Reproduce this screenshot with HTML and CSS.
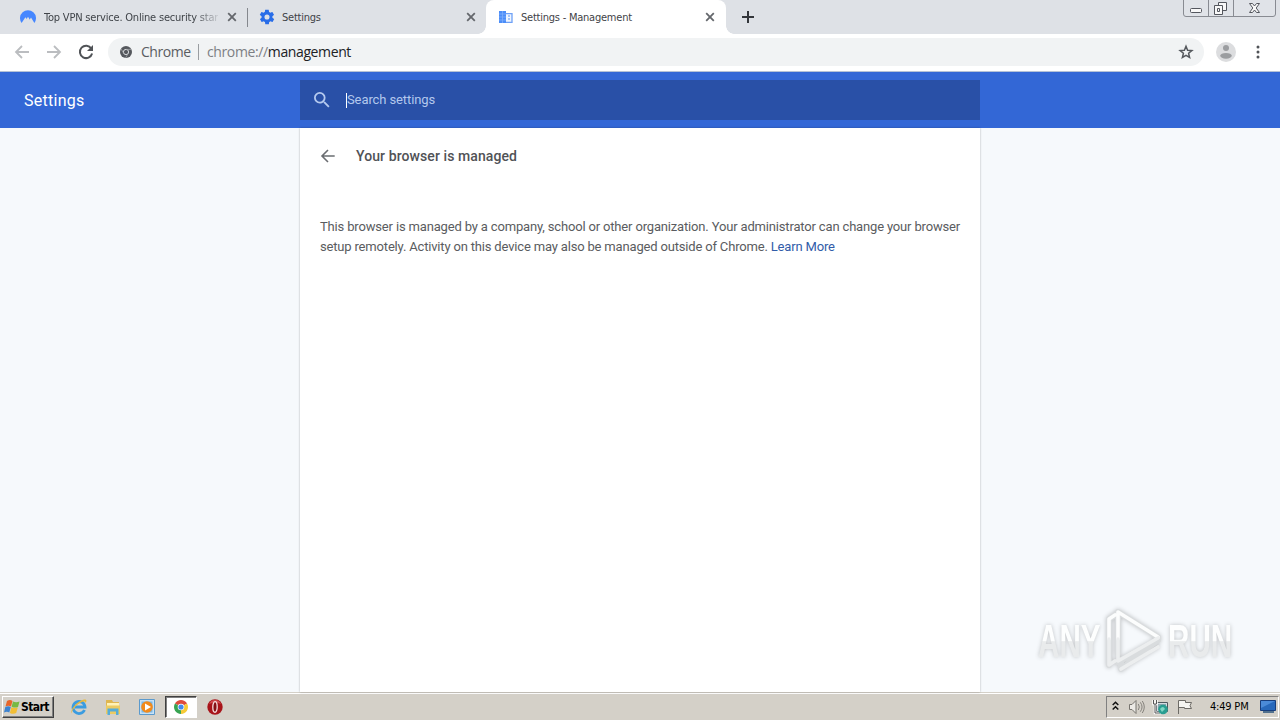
FILE: index.html
```html
<!DOCTYPE html>
<html lang="en">
<head>
<meta charset="utf-8">
<title>Settings - Management</title>
<link rel="stylesheet" href="styles.css">
</head>
<body>
<div class="screen">
  <div class="tabstrip">
    <div class="tab tab-first">
      <svg class="fav" width="16" height="16" viewBox="0 0 16 16"><path d="M1.6 14A8 8 0 1 1 14.4 14L11 8.6 9.8 10.6 10.3 11.6 8 7.8 6.7 10 5.4 8.3Z" fill="#4687ff"/></svg>
      <span class="tab-title fade">Top VPN service. Online security star</span>
      <svg class="close" width="10" height="10" viewBox="0 0 10 10"><path d="M1.2 1.2 8.8 8.8M8.8 1.2 1.2 8.8" stroke="#64676c" stroke-width="1.8"/></svg>
    </div>
    <div class="tab tab-second">
      <svg class="fav" width="16" height="16" viewBox="1 1 22 22"><path fill="#296de8" d="M19.4 13c.1-.3.1-.6.1-1s0-.7-.1-1l2.1-1.6c.2-.2.2-.4.1-.6l-2-3.5c-.1-.2-.4-.3-.6-.2l-2.5 1c-.5-.4-1.1-.7-1.7-1l-.4-2.6c0-.3-.2-.5-.5-.5h-4c-.3 0-.5.2-.5.5l-.4 2.6c-.6.3-1.2.6-1.7 1l-2.5-1c-.2-.1-.5 0-.6.2l-2 3.5c-.1.2-.1.4.1.6L4.600 11c-.1.3-.1.6-.1 1s0 .7.1 1l-2.100 1.600c-.2.2-.2.4-.1.6l2 3.500c.1.2.4.3.6.2l2.500-1c.5.4 1.100.7 1.700 1l.4 2.600c0 .3.2.5.5.5h4c.3 0 .5-.2.5-.5l.4-2.600c.6-.3 1.200-.6 1.700-1l2.500 1c.2.1.5 0 .6-.2l2-3.500c.1-.2.1-.4-.1-.6L19.400 13zM12 15.500a3.500 3.500 0 1 1 0-7 3.500 3.500 0 0 1 0 7z"/></svg>
      <span class="tab-title">Settings</span>
      <svg class="close" width="10" height="10" viewBox="0 0 10 10"><path d="M1.200 1.200 8.800 8.800M8.800 1.200 1.200 8.800" stroke="#64676c" stroke-width="1.800"/></svg>
    </div>
    <div class="tab tab-active">
      <svg class="fav" width="16" height="16" viewBox="0 0 16 16"><path d="M1 2h7v12H1z" fill="#4b8df8"/><path d="M8 4.700h6v8.600H8" fill="#eef5ff" stroke="#6fa1f6" stroke-width="1.300"/><path d="M1 5h7M1 8h7M1 11h7M4.500 2v12" stroke="#7eaefb" stroke-width=".8"/><path d="M10 7h2M10 10h2" stroke="#8db5f8" stroke-width="1.500"/></svg>
      <span class="tab-title">Settings - Management</span>
      <svg class="close" width="10" height="10" viewBox="0 0 10 10"><path d="M1.200 1.200 8.800 8.800M8.800 1.200 1.200 8.800" stroke="#64676c" stroke-width="1.800"/></svg>
    </div>
    <svg class="newtab" width="12" height="12" viewBox="0 0 12 12"><path d="M6 0v12M0 6h12" stroke="#33363b" stroke-width="2"/></svg>
    <svg class="winbtns" width="94" height="18" viewBox="0 0 94 18"><path d="M.5 0v14q0 2.500 2.500 2.500h87q2.500 0 2.500-2.500V0M25.500 0v16.500M50.500 0v16.500" fill="#e0e3e8" stroke="#888b92"/><g fill="#f8f8f8" stroke="#54575e"><rect x="7.500" y="8.500" width="11" height="4" rx="1"/><path d="M35.500 2.500h8v8h-8z"/><path d="M31.500 5.500h8v9h-8z"/><path d="M34.500 8.500h2v3h-2z"/><path d="M66.500 3.500h3l2 2.500 2-2.500h3l-3.300 4.500 3.300 4.500h-3l-2-2.500-2 2.500h-3L69.800 8z"/></g></svg>
  </div>

  <div class="toolbar">
    <svg class="nav" width="16" height="16" viewBox="0 0 16 16"><path d="M15 8H2.500M8 2 2 8l6 6" fill="none" stroke="#bbbdc0" stroke-width="1.800"/></svg>
    <svg class="nav" width="16" height="16" viewBox="0 0 16 16"><path d="M1 8h12.500M8 2l6 6-6 6" fill="none" stroke="#bbbdc0" stroke-width="1.800"/></svg>
    <svg class="nav" width="16" height="16" viewBox="0 0 16 16"><path d="M13.300 4.500A6.200 6.200 0 1 0 14.100 9.500" fill="none" stroke="#505357" stroke-width="2"/><path d="M15 1v6H9z" fill="#505357"/></svg>
    <div class="omnibox">
      <svg class="chip-icon" width="12" height="12" viewBox="0 0 12 12"><circle cx="6" cy="6" r="6" fill="#55585d"/><circle cx="6" cy="6" r="2.600" fill="none" stroke="#d8dadd"/><path d="M6 3.400h5.300M3.700 7.300 1.100 3M8.300 7.300 5.600 11.800" stroke="#a5a8ab" stroke-width=".8"/></svg>
      <span class="chip">Chrome</span><span class="divider"></span><span class="url"><span class="scheme">chrome://</span>management</span>
      <svg class="star" width="16" height="16" viewBox="0 0 16 16"><path d="m8 2.200 1.600 4 4.300.3-3.300 2.800 1 4.200L8 11.300l-3.600 2.200 1-4.200-3.300-2.800 4.300-.3z" fill="none" stroke="#55585d" stroke-width="1.500"/></svg>
    </div>
    <svg class="avatar" width="20" height="20" viewBox="0 0 20 20"><circle cx="10" cy="10" r="10" fill="#dcdddf"/><circle cx="10" cy="6" r="3" fill="#9b9da0"/><ellipse cx="10" cy="13.800" rx="5.800" ry="2.900" fill="#9b9da0"/></svg>
    <svg class="menu" width="4" height="14" viewBox="0 0 4 14"><g fill="#505357"><circle cx="2" cy="2" r="1.500"/><circle cx="2" cy="7" r="1.500"/><circle cx="2" cy="12" r="1.500"/></g></svg>
  </div>

  <div class="header">
    <div class="brand">Settings</div>
    <div class="search">
      <svg width="16" height="16" viewBox="3 3 18 18"><path fill="#b5caef" d="M15.500 14h-.79l-.28-.27A6.470 6.470 0 0 0 16 9.500 6.500 6.500 0 1 0 9.500 16c1.610 0 3.090-.59 4.230-1.570l.27.28v.79l5 4.990L20.490 19l-4.990-5zm-6 0C7.010 14 5 11.990 5 9.500S7.010 5 9.500 5 14 7.010 14 9.500 11.990 14 9.500 14z"/></svg>
      <span class="caret"></span><span class="placeholder">Search settings</span>
    </div>
  </div>

  <div class="content">
    <div class="panel">
      <div class="panel-head">
        <svg width="16" height="16" viewBox="0 0 16 16"><path d="M14.700 8H2.500M8 2 2 8l6 6" fill="none" stroke="#6a6d71" stroke-width="1.600"/></svg>
        <h1>Your browser is managed</h1>
      </div>
      <p><span class="line line-one">This browser is managed by a company, school or other organization. Your administrator can change your browser</span>
      <span class="line line-two">setup remotely. Activity on this device may also be managed outside of Chrome. <a>Learn More</a></span></p>
    </div>
    <div class="watermark">
      <span class="wm-text">ANY</span>
      <svg width="60" height="66" viewBox="0 0 60 66"><g fill="none" stroke-linejoin="round" stroke-linecap="round"><g stroke="#d9dcde" stroke-width="6"><path d="M5 57V11l6-4M14 45V4l40 25M14 54l40-22L17 61V54"/></g><g stroke="#fcfdfd" stroke-width="3.600"><path d="M5 31V11l6-4M14 31V4l40 25"/></g><g stroke="#eceeef" stroke-width="3.600"><path d="M5 31v26l6-4M14 31v22l40-23M17 61l37-22"/></g></g></svg>
      <span class="wm-text wm-run">RUN</span>
    </div>
  </div>

  <div class="taskbar">
    <div class="start">
      <svg width="17" height="16" viewBox="0 0 17 16"><path d="M3 2q3-2 5.500 0L7 7.500Q4.500 6 1.500 7.500z" fill="#e8662a"/><path d="M9 2.400q3 1.600 6.500 0L14 8q-3 1.300-6.400-.3z" fill="#77b943"/><path d="M1.300 8.100q3-1.500 5.500 0l-1.500 5.400q-2.500-1.500-5.300 0z" fill="#3d83d0"/><path d="M7.400 8.300q3 1.500 6.400.2l-1.600 5.600q-3 1.600-6.300-.2z" fill="#f2be35"/></svg>
      <span>Start</span>
    </div>
    <svg class="task ie" width="18" height="18" viewBox="0 0 18 18"><path d="M14.500 12A6 6 0 1 1 15 9H5" fill="none" stroke="#3b9ce0" stroke-width="2.800"/><path d="M2 15.500C-1 13 7 3 14 1.500c4-.5 2 3 1.500 3.800C16 2 11 3 6 8c-4 4-4.500 6.500-4 7.500z" fill="#e8b93c"/></svg>
    <svg class="task folder" width="18" height="18" viewBox="0 0 18 18"><path d="M2 2h6l1 2h6v12H2z" fill="#dfb650"/><path d="M3 5h12v5H3z" fill="#fff2b6"/><path d="M2 7.500h14V16H2z" fill="#eccb62"/><path d="M3.500 17v-6.500h11V17H12v-3.500H6V17z" fill="#55acd8"/></svg>
    <svg class="task media" width="16" height="16" viewBox="0 0 16 16"><path d="M.5.500h15v15H.5z" fill="#c7e1f5" stroke="#5b9acd"/><path d="M2.500 2.500h11v11h-11z" fill="#76b7e8"/><circle cx="8" cy="8" r="5.800" fill="#f18a1c"/><path d="m6 4.500 6 3.500-6 3.500z" fill="#fff"/></svg>
    <div class="task-active"><svg width="14" height="14" viewBox="0 0 14 14"><path d="M7 7 .94 3.500A7 7 0 0 1 13.060 3.500z" fill="#de4b3c"/><path d="M7 7 13.060 3.500A7 7 0 0 1 7 14z" fill="#f6ca36"/><path d="M7 7v7A7 7 0 0 1 .94 3.500z" fill="#38a452"/><circle cx="7" cy="7" r="3.300" fill="#fff"/><circle cx="7" cy="7" r="2.600" fill="#4289ed"/></svg></div>
    <svg class="task opera" width="16" height="16" viewBox="0 0 16 16"><circle cx="8" cy="8" r="7.700" fill="#a8141a"/><path d="M2 5a6.500 6.500 0 0 1 12 0q-6-3-12 0z" fill="#d0484c"/><ellipse cx="8" cy="8" rx="2.200" ry="5.300" fill="#851015" stroke="#f6dede" stroke-width="1.300"/></svg>
    <div class="tray">
      <svg class="chev" width="7" height="10" viewBox="0 0 7 10"><path d="m.7 4 2.800-2.800L6.300 4M.7 8.500l2.800-2.800 2.800 2.800" fill="none" stroke="#111" stroke-width="1.500"/></svg>
      <svg class="vol" width="17" height="16" viewBox="0 0 17 16"><path d="M1.500 5.500H4l4-4v13l-4-4H1.500z" fill="#eceae5" stroke="#77746e"/><path d="M10.300 5q2 3 0 6M12.300 3.300q3.500 4.700 0 9.400M14.300 2q4 6 0 12" fill="none" stroke="#86837d"/></svg>
      <svg class="net" width="17" height="16" viewBox="0 0 17 16"><path d="M4.500 3.500h11v9h-11z" fill="#d5dbe0" stroke="#4f585f"/><path d="M6 5h8v6H6z" fill="#82a6ad"/><path d="M1.500 1v4h3V1M3 5v9h6" fill="none" stroke="#fff" stroke-width="2.500"/><path d="M1.500 1v4h3V1M3 5v9h5" fill="none" stroke="#555"/><circle cx="11" cy="10.500" r="4.800" fill="#299e91"/><path d="M8 10q3-4 5 0l-3 3z" fill="#80d5c3"/></svg>
      <svg class="flag" width="17" height="16" viewBox="0 0 17 16"><path d="M2.500 15V1.500h7v2h6q-3 3.500 0 6h-7v-1h-6" fill="#f5f4f0" stroke="#6d6b66"/></svg>
      <span class="clock">4:49 PM</span>
      <svg class="desk" width="16" height="14" viewBox="0 0 16 14"><path d="M.5.500h15v10H.5z" fill="#2869bb" stroke="#183e7c"/><path d="M1 1h14L1 8z" fill="#4b8bd8"/><path d="M3 12h11" stroke="#52718e" stroke-width="2"/></svg>
    </div>
  </div>
</div>
</body>
</html>
```
FILE: styles.css
```css
* { box-sizing: border-box; }
body { margin: 0; }
svg { display: block; flex: none; }
.screen { width: 1280px; height: 720px; overflow: hidden; display: flex; flex-direction: column; font-family: Roboto, sans-serif; background: #fff; }

.tabstrip { height: 34px; flex: none; display: flex; align-items: center; background: #dee1e6; font: 11px/14px "DejaVu Sans Condensed", "DejaVu Sans", sans-serif; font-stretch: condensed; color: #3f4348; }
.tab { height: 34px; display: flex; align-items: center; }
.tab-first { width: 248px; padding: 0 10px 0 20px; border-right: 1px solid #85888e; height: 19px; }
.tab-second { width: 238px; padding: 0 10px 0 11px; }
.tab-active { width: 240px; padding: 0 11px 0 12px; background: #fff; border-radius: 8px 8px 0 0; position: relative; }
.tab-active::before, .tab-active::after { content: ""; position: absolute; bottom: 0; width: 8px; height: 8px; }
.tab-active::before { left: -8px; background: radial-gradient(circle at 0 0, #dee1e6 7.5px, #fff 8px); }
.tab-active::after { right: -8px; background: radial-gradient(circle at 100% 0, #dee1e6 7.5px, #fff 8px); }
.tab-title { flex: 1; margin-left: 7px; padding-top: 1px; white-space: nowrap; letter-spacing: -.23px; }
.fade { flex: none; width: 174px; margin-left: 8px; margin-right: 9px; letter-spacing: -.2px; mask-image: linear-gradient(to right, #000 150px, transparent 178px); }
.newtab { margin-left: 16px; }
.winbtns { align-self: flex-start; margin-left: auto; margin-right: 3px; }

.toolbar { height: 38px; flex: none; display: flex; align-items: center; padding: 0 20px 1px 14px; background: #fff; border-bottom: 1px solid #b5c2d6; }
.nav { margin-right: 16px; }
.omnibox { width: 1096px; height: 28px; margin-left: -2px; padding: 0 10px 0 12px; border-radius: 14px; background: #f1f3f4; display: flex; align-items: center; font: 14px/20px "Open Sans", sans-serif; color: #202124; }
.chip { margin-left: 9px; color: #5a5d62; width: 49px; letter-spacing: -.45px; }
.divider { width: 1px; height: 16px; margin: 0 8px; background: #9a9da1; }
.scheme { color: #7d8084; }
.url { white-space: nowrap; letter-spacing: -.38px; }
.star { margin-left: auto; }
.avatar { margin-left: 12px; }
.menu { margin-left: auto; }

.header { height: 56px; flex: none; display: flex; align-items: center; background: #3367d6; color: #fff; }
.brand { width: 300px; padding-left: 24px; font-size: 16px; line-height: 24px; letter-spacing: .28px; padding-top: 1px; }
.search { width: 680px; height: 40px; padding-left: 14px; display: flex; align-items: center; background: #2950a7; font-size: 13px; }
.caret { width: 1px; height: 15px; margin-left: 16px; background: #fff; }
.placeholder { color: #b3c8ed; letter-spacing: -.1px; padding-bottom: 2px; }

.content { flex: 1; min-height: 0; position: relative; display: flex; justify-content: center; background: #f6f9fc; }
.panel { width: 680px; background: #fff; box-shadow: 0 0 2px rgba(0,0,0,.3); color: #5a5c60; }
.panel-head { height: 56px; display: flex; align-items: center; padding-left: 20px; }
.panel-head h1 { margin: 0 0 0 20px; font-size: 14px; line-height: 20px; font-weight: 500; letter-spacing: .09px; color: #505256; }
.panel p { margin: 33px 0 0; padding-left: 20px; font-size: 13px; line-height: 20px; }
.line { display: block; white-space: nowrap; }
.line-one { letter-spacing: -.163px; }
.line-two { letter-spacing: -.173px; }
.panel a { color: #315ca9; }
.watermark { position: absolute; left: 1038px; top: 480px; width: 200px; height: 66px; display: flex; align-items: center; filter: drop-shadow(0 0 2px rgba(0,0,0,.22)); }
.wm-text { flex: none; width: 104px; margin-right: -38px; font: bold 47px/60px "Liberation Sans", sans-serif; transform: scaleX(.63); transform-origin: left; background: linear-gradient(#fdfefe 50%, #e9ebec 51%); background-clip: text; -webkit-background-clip: text; color: transparent; white-space: nowrap; }
.wm-run { margin-left: 4px; }

.taskbar { height: 28px; flex: none; display: flex; align-items: center; padding: 1px 1px 0 2px; background: #d4d0c8; border-top: 1px solid #d4d0c8; box-shadow: inset 0 1px #fff; }
.start { width: 52px; height: 22px; display: flex; align-items: center; gap: 0; padding-left: 1px; background: #d4d0c8; border: 1px solid; border-color: #fff #404040 #404040 #fff; box-shadow: inset -1px -1px #808080; font: bold 12px/14px "DejaVu Sans Condensed", "DejaVu Sans", sans-serif; font-stretch: condensed; letter-spacing: -.55px; color: #000; }
.ie { margin-left: 16px; }
.folder { margin-left: 16px; }
.media { margin-left: 17px; }
.task-active { width: 32px; height: 22px; margin-left: 10px; display: flex; align-items: center; justify-content: center; background: #fff; border: 1px solid; border-color: #404040 #fff #fff #404040; box-shadow: inset 1px 1px #808080; }
.opera { margin-left: 10px; }
.tray { width: 173px; height: 22px; margin-left: auto; display: flex; align-items: center; padding-left: 5px; border: 1px solid; border-color: #808080 #fff #fff #808080; font: 11px/14px "DejaVu Sans Condensed", "DejaVu Sans", sans-serif; font-stretch: condensed; color: #000; }
.chev { margin-bottom: 2px; }
.vol { margin-left: 9px; }
.net { margin-left: 7px; }
.flag { margin-left: 7px; }
.clock { margin-left: 17px; width: 42px; white-space: nowrap; letter-spacing: -.2px; }
.desk { margin-left: 8px; }
```
